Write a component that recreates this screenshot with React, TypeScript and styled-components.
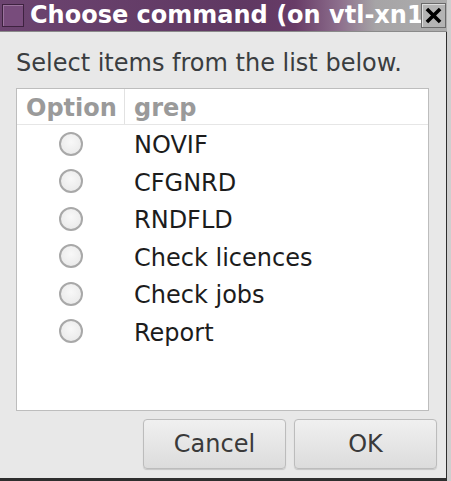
import React, { useState } from 'react';
import styled, { createGlobalStyle } from 'styled-components';

const Global = createGlobalStyle`
  html, body {
    margin: 0;
    padding: 0;
    background: #cfcfcf;
  }
  body {
    font-family: "DejaVu Sans", "Liberation Sans", sans-serif;
  }
`;

const Window = styled.div`
  width: 451px;
  height: 481px;
  box-sizing: border-box;
  display: flex;
  flex-direction: column;
  background: #e8e8e8;
  border-right: 4px solid #cfcfcf;
  box-shadow: inset -1px -3px 0 #2e2e2e;
  overflow: hidden;
`;

const TitleBar = styled.div`
  height: 31px;
  flex-shrink: 0;
  display: flex;
  align-items: center;
  padding: 0 1px 0 2px;
  background: linear-gradient(to right, #6c4470 0%, #5f3862 55%, #683c67 66%, #8d6f8d 76%, #a6a4a6 84%, #adadad 100%);
  border-bottom: 1px solid #8a8a8a;
  overflow: hidden;
`;

const WindowIcon = styled.div`
  width: 20px;
  height: 21px;
  flex-shrink: 0;
  background: #784c7c;
  border: 1px solid #3e2240;
  box-shadow: inset 1px 1px 0 #9a739c;
`;

const Title = styled.div`
  flex: 1;
  margin-left: 6px;
  color: #ffffff;
  font-weight: bold;
  font-size: 24px;
  white-space: nowrap;
  overflow: hidden;
  line-height: 31px;
`;

const CloseButton = styled.div`
  width: 23px;
  height: 23px;
  flex-shrink: 0;
  display: flex;
  align-items: center;
  justify-content: center;
  background: #b4b4b4;
  border: 1px solid #6a6a6a;
  box-shadow: inset 1px 1px 0 #dedede;
`;

const Body = styled.div`
  flex: 1;
  display: flex;
  flex-direction: column;
  padding: 18px 15px 0 16px;
`;

const Prompt = styled.div`
  font-size: 24px;
  color: #3a3d40;
  line-height: 26px;
  margin-bottom: 12px;
  white-space: nowrap;
`;

const ListBox = styled.div`
  width: 413px;
  height: 323px;
  box-sizing: border-box;
  background: #ffffff;
  border: 1px solid #bdbdbd;
  display: flex;
  flex-direction: column;
`;

const HeaderRow = styled.div`
  display: grid;
  grid-template-columns: 108px 1fr;
  height: 36px;
  box-sizing: border-box;
  border-bottom: 1px solid #e6e6e6;
`;

const HeaderCell = styled.div<{ $divider?: boolean }>`
  display: flex;
  align-items: center;
  padding: 2px 0 0 9px;
  font-size: 24px;
  font-weight: bold;
  color: #9a9a9a;
  border-right: ${p => (p.$divider ? '1px solid #e2e2e2' : 'none')};
`;

const Row = styled.div`
  display: grid;
  grid-template-columns: 108px 1fr;
  height: 37.5px;
  align-items: center;
  cursor: default;
`;

const RadioCell = styled.div`
  display: flex;
  justify-content: center;
`;

const Radio = styled.div<{ $checked?: boolean }>`
  width: 20px;
  height: 20px;
  border-radius: 50%;
  border: 2px solid #a8a8a8;
  background: radial-gradient(circle at 50% 40%, #f8f8f8 0%, #ececec 70%, #dedede 100%);
  display: flex;
  align-items: center;
  justify-content: center;
  &::after {
    content: '';
    width: 8px;
    height: 8px;
    border-radius: 50%;
    background: #444;
    display: ${p => (p.$checked ? 'block' : 'none')};
  }
`;

const Label = styled.div`
  font-size: 24px;
  color: #1c1c1c;
  padding: 3px 0 0 9px;
  white-space: nowrap;
`;

const Buttons = styled.div`
  display: flex;
  justify-content: flex-end;
  gap: 8px;
  margin-top: 8px;
  margin-right: -5px;
`;

const Button = styled.button`
  width: 143px;
  height: 50px;
  box-sizing: border-box;
  border: 1px solid #bcbcbc;
  border-radius: 4px;
  background: linear-gradient(to bottom, #f0f0f0 0%, #e6e6e6 50%, #dcdcdc 100%);
  box-shadow: 0 1px 1px rgba(0, 0, 0, 0.15);
  font-family: "DejaVu Sans", sans-serif;
  font-size: 24px;
  color: #3a3a3a;
  padding: 0;
`;

const options = ['NOVIF', 'CFGNRD', 'RNDFLD', 'Check licences', 'Check jobs', 'Report'];

function App() {
  const [selected, setSelected] = useState<number | null>(null);

  return (
    <>
      <Global />
      <Window>
        <TitleBar>
          <WindowIcon />
          <Title>Choose command (on vtl-xn1</Title>
          <CloseButton>
            <svg width="17" height="17" viewBox="0 0 16 16">
              <path d="M3 3 L13 13 M13 3 L3 13" stroke="#000" strokeWidth="3.4" strokeLinecap="square" />
            </svg>
          </CloseButton>
        </TitleBar>
        <Body>
          <Prompt>Select items from the list below.</Prompt>
          <ListBox>
            <HeaderRow>
              <HeaderCell $divider>Option</HeaderCell>
              <HeaderCell>grep</HeaderCell>
            </HeaderRow>
            {options.map((o, i) => (
              <Row key={o} onClick={() => setSelected(i)}>
                <RadioCell>
                  <Radio $checked={selected === i} />
                </RadioCell>
                <Label>{o}</Label>
              </Row>
            ))}
          </ListBox>
          <Buttons>
            <Button>Cancel</Button>
            <Button>OK</Button>
          </Buttons>
        </Body>
      </Window>
    </>
  );
}

export default App;
